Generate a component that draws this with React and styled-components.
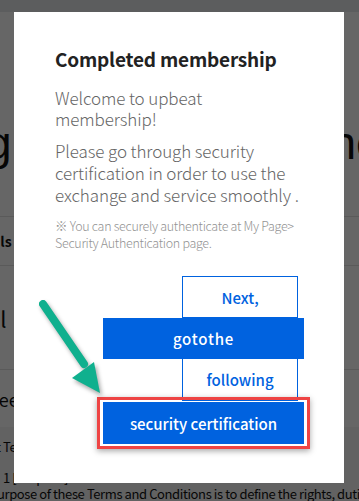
import React from "react";
import styled, { createGlobalStyle } from "styled-components";

const Global = createGlobalStyle`
  html, body { margin: 0; padding: 0; background: #fff; }
  body { font-family: "Noto Sans CJK KR", "Noto Sans", sans-serif; overflow: hidden; }
  * { box-sizing: border-box; }
`;

const Page = styled.div`
  width: 359px;
  height: 501px;
  position: relative;
  overflow: hidden;
  background: #fff;
  color: #111;
`;

const Header = styled.div`
  height: 12px;
  background: #e7e8ec;
`;

const Heading = styled.div`
  display: flex;
  justify-content: space-between;
  padding-top: 108px;
  font-family: "Liberation Sans", sans-serif;
  font-size: 46px;
  line-height: 46px;
  height: 204px;
  overflow: hidden;
`;

const HeadLeft = styled.span`
  margin-left: -14px;
`;
const HeadRight = styled.span`
  margin-right: -20px;
`;

const Row = styled.div`
  height: ${(p) => p.$h}px;
  border-top: 1px solid ${(p) => p.$line || "transparent"};
  display: flex;
  align-items: center;
  font-size: ${(p) => p.$fs}px;
  font-weight: ${(p) => p.$fw || 400};
  white-space: nowrap;
`;

const Clip = styled.span`
  margin-left: ${(p) => p.$ml}px;
`;

const Terms = styled.div`
  background: #f4f4f4;
  font-size: 13px;
  line-height: 16px;
  padding-top: 12px;
  letter-spacing: -0.4px;
  white-space: nowrap;
  color: #111;
`;

const TermsLine = styled.div`
  margin-left: ${(p) => p.$ml}px;
  margin-bottom: ${(p) => p.$mb || 0}px;
`;

const Overlay = styled.div`
  position: absolute;
  inset: 0;
  background: rgba(0, 0, 0, 0.6);
  padding: 12px 15px 18px 14px;
`;

const Modal = styled.div`
  background: #fff;
  width: 330px;
  height: 471px;
  padding: 33px 40px 0 41px;
  position: relative;
`;

const Title = styled.h2`
  margin: 0 0 14px;
  font-size: 19px;
  line-height: 28px;
  font-weight: 700;
  color: #222;
  letter-spacing: -0.2px;
`;

const Para = styled.p`
  margin: 0 0 ${(p) => p.$mb}px;
  font-size: 17px;
  line-height: ${(p) => p.$lh}px;
  font-weight: 300;
  color: #666;
  letter-spacing: -0.1px;
`;

const Note = styled.p`
  margin: 0;
  font-size: 12.5px;
  line-height: 17px;
  font-weight: 300;
  color: #939393;
  letter-spacing: -0.3px;
`;

const Buttons = styled.div`
  margin-top: 25px;
  display: flex;
  flex-direction: column;
  align-items: flex-start;
`;

const Btn = styled.div`
  margin-left: ${(p) => p.$ml}px;
  width: ${(p) => p.$w}px;
  height: ${(p) => p.$h}px;
  display: flex;
  align-items: center;
  justify-content: center;
  font-size: 15px;
  font-weight: 500;
  letter-spacing: ${(p) => p.$ls || 0}px;
  background: ${(p) => (p.$solid ? "#0062df" : "#fff")};
  color: ${(p) => (p.$solid ? "#fff" : "#0062df")};
  border: ${(p) => (p.$solid ? "none" : "1px solid #0062df")};
  border-top: ${(p) => (p.$noTop ? "none" : p.$solid ? "none" : "1px solid #0062df")};
`;

const Highlight = styled.div`
  margin-left: 42px;
  margin-top: -4px;
  border: 3px solid #ee4444;
  padding: 2px 3px;
  box-shadow: 0 2px 6px rgba(0, 0, 0, 0.35);
`;

const Arrow = styled.svg`
  position: absolute;
  left: 14px;
  top: 288px;
  overflow: visible;
  filter: drop-shadow(2px 3px 2px rgba(0, 0, 0, 0.35));
`;

export default function App() {
  return (
    <>
      <Global />
      <Page>
        <Header />
        <Heading>
          <HeadLeft>g</HeadLeft>
          <HeadRight>nc</HeadRight>
        </Heading>
        <Row $h={49} $line="#e2e2e2" $fs={14} $fw={700}>
          <Clip $ml={-8}>als</Clip>
        </Row>
        <Row $h={104} $line="#e2e2e2" $fs={22}>
          <Clip $ml={-6}>ll</Clip>
        </Row>
        <Row $h={58} $line="#e2e2e2" $fs={18}>
          <Clip $ml={-8}>ree</Clip>
        </Row>
        <Terms>
          <TermsLine $ml={-4} $mb={15}>t Terms</TermsLine>
          <TermsLine $ml={3}>1 [Purpose]</TermsLine>
          <TermsLine $ml={-3}>urpose of these Terms and Conditions is to define the rights, duties, responsibilities</TermsLine>
        </Terms>
        <Overlay>
          <Modal>
            <Title>Completed membership</Title>
            <Para $mb={11} $lh={21}>Welcome to upbeat membership!</Para>
            <Para $mb={11} $lh={22}>
              Please go through security certification in order to use the exchange and service smoothly .
            </Para>
            <Note>※ You can securely authenticate at My Page&gt; Security Authentication page.</Note>
            <Buttons>
              <Btn $ml={127} $w={116} $h={42}>Next,</Btn>
              <Btn $ml={48} $w={201} $h={41} $ls={0.8} $solid>gotothe</Btn>
              <Btn $ml={127} $w={116} $h={42} $noTop>following</Btn>
              <Highlight>
                <Btn $ml={0} $w={201} $h={42} $solid>security certification</Btn>
              </Highlight>
            </Buttons>
          </Modal>
          <Arrow width="100" height="110" viewBox="0 0 100 110">
            <path d="M29 16 L70 76" stroke="#10b08e" strokeWidth="8" strokeLinecap="round" fill="none" />
            <path d="M58 90 L80 74 L86 105 Z" fill="#10b08e" />
          </Arrow>
        </Overlay>
      </Page>
    </>
  );
}
